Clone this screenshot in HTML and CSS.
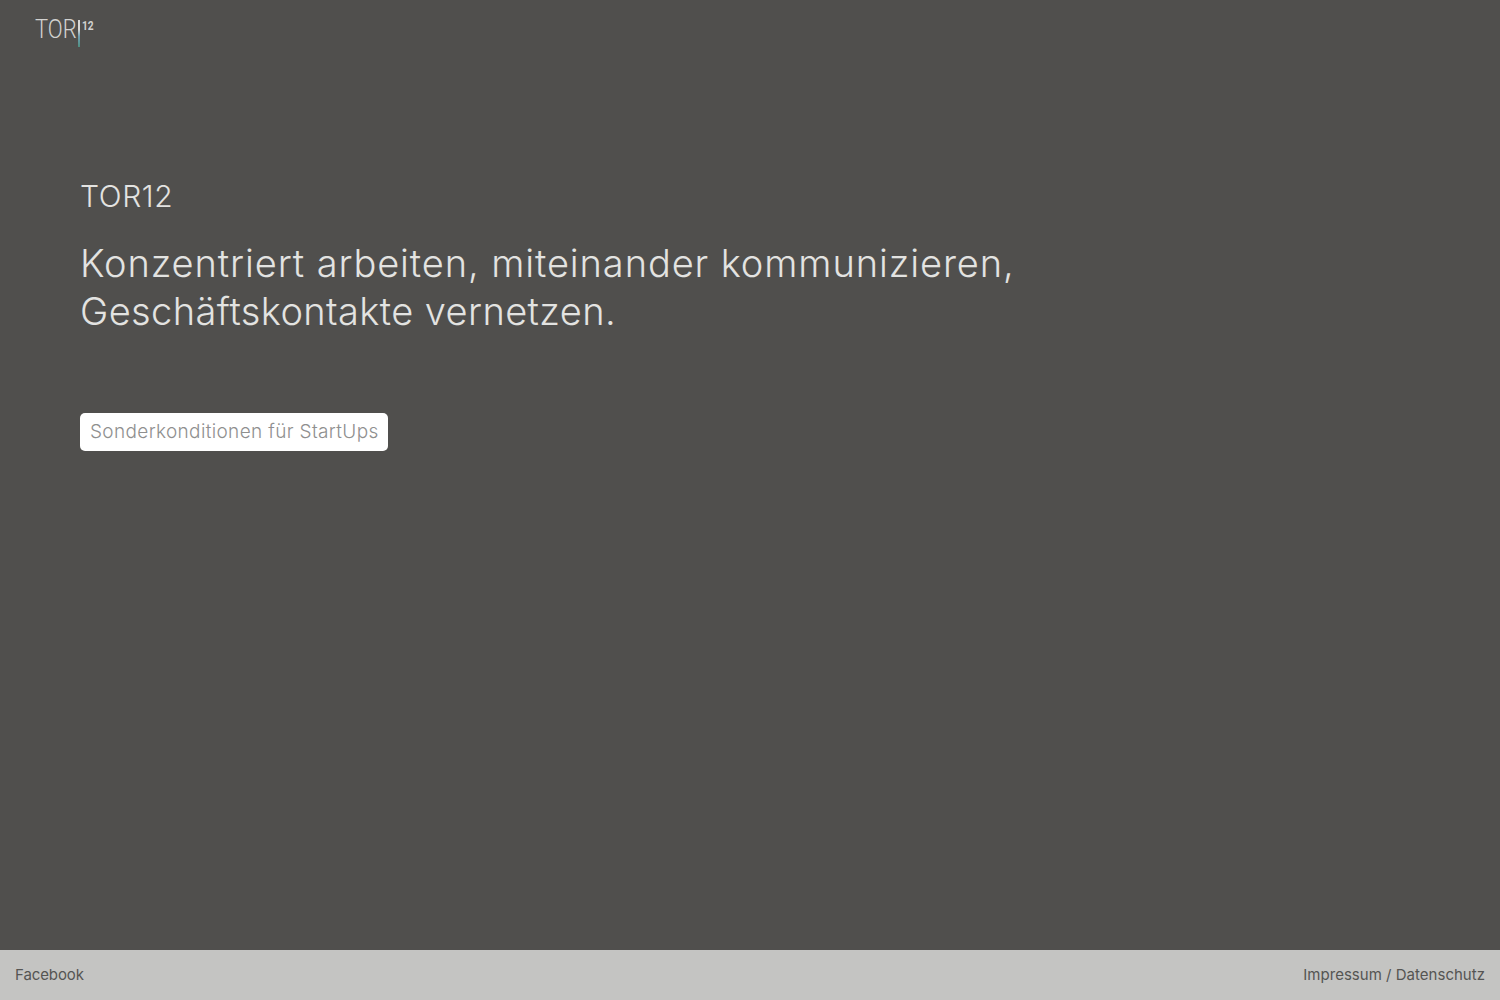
FILE: index.html
```html
<!DOCTYPE html>
<html lang="de">
<head>
<meta charset="utf-8">
<title>TOR12</title>
<link rel="stylesheet" href="styles.css">
</head>
<body>
<div class="page">
  <header class="top">
    <a class="logo" href="#">
      <span class="logo-tor">TOR</span>
      <span class="logo-bar"></span>
      <span class="logo-num">12</span>
    </a>
  </header>
  <main class="hero">
    <h2 class="kicker">TOR12</h2>
    <h1 class="claim">Konzentriert arbeiten, miteinander kommunizieren,<br><span class="claim-second">Geschäftskontakte vernetzen.</span></h1>
    <a class="cta" href="#">Sonderkonditionen für StartUps</a>
  </main>
  <footer class="foot">
    <a class="foot-left" href="#">Facebook</a>
    <a class="foot-right" href="#">Impressum / Datenschutz</a>
  </footer>
</div>
</body>
</html>
```
FILE: styles.css
```css
* { box-sizing: border-box; }
html, body { margin: 0; height: 100%; }
body {
  background: #504f4d;
  color: #e3e3e1;
  font-family: Inter, "Noto Sans", sans-serif;
  font-weight: 300;
}
a { color: inherit; text-decoration: none; }
.page { height: 1000px; display: flex; flex-direction: column; }
.top { height: 50px; padding: 14px 0 0 35px; }
.logo { display: flex; align-items: flex-start; color: #d2d2d0; }
.logo-tor {
  display: block;
  font-family: Roboto, sans-serif;
  font-weight: 300;
  font-size: 25px;
  line-height: 32px;
  transform: scaleX(0.88);
  transform-origin: left center;
  margin-right: -4px;
}
.logo-bar {
  width: 2px;
  height: 27px;
  margin: 6px 0 0 0;
  background: linear-gradient(#d8d8d6 0, #d8d8d6 35%, #6f9fb4 60%, #4f8f80 100%);
}
.logo-num {
  display: block;
  font-family: Roboto, sans-serif;
  font-weight: 700;
  font-size: 12px;
  line-height: 12px;
  margin: 6px 0 0 2px;
  transform: scaleX(0.85);
  transform-origin: left center;
}
.hero { flex: 1; padding: 128px 80px 0; }
.kicker {
  margin: 0;
  font-size: 30px;
  line-height: 36px;
  font-weight: 300;
  letter-spacing: 0.6px;
}
.claim {
  margin: 25px 0 0;
  font-size: 38px;
  line-height: 48px;
  font-weight: 300;
  letter-spacing: 0.9px;
}
.claim-second { letter-spacing: 0.4px; }
.cta {
  display: inline-block;
  margin-top: 78px;
  height: 38px;
  width: 308px;
  padding: 0 10px;
  background: #fff;
  border-radius: 5px;
  color: #8f8f8f;
  font-size: 19px;
  line-height: 38px;
  white-space: nowrap;
  letter-spacing: 0.35px;
}
.foot {
  height: 50px;
  flex: none;
  background: #c4c4c2;
  color: #555553;
  display: flex;
  justify-content: space-between;
  align-items: center;
  padding: 0 15px 2px;
  font-size: 15px;
  font-weight: 400;
}
.foot-left { letter-spacing: -0.1px; }
.foot-right { letter-spacing: 0.02px; }
```
